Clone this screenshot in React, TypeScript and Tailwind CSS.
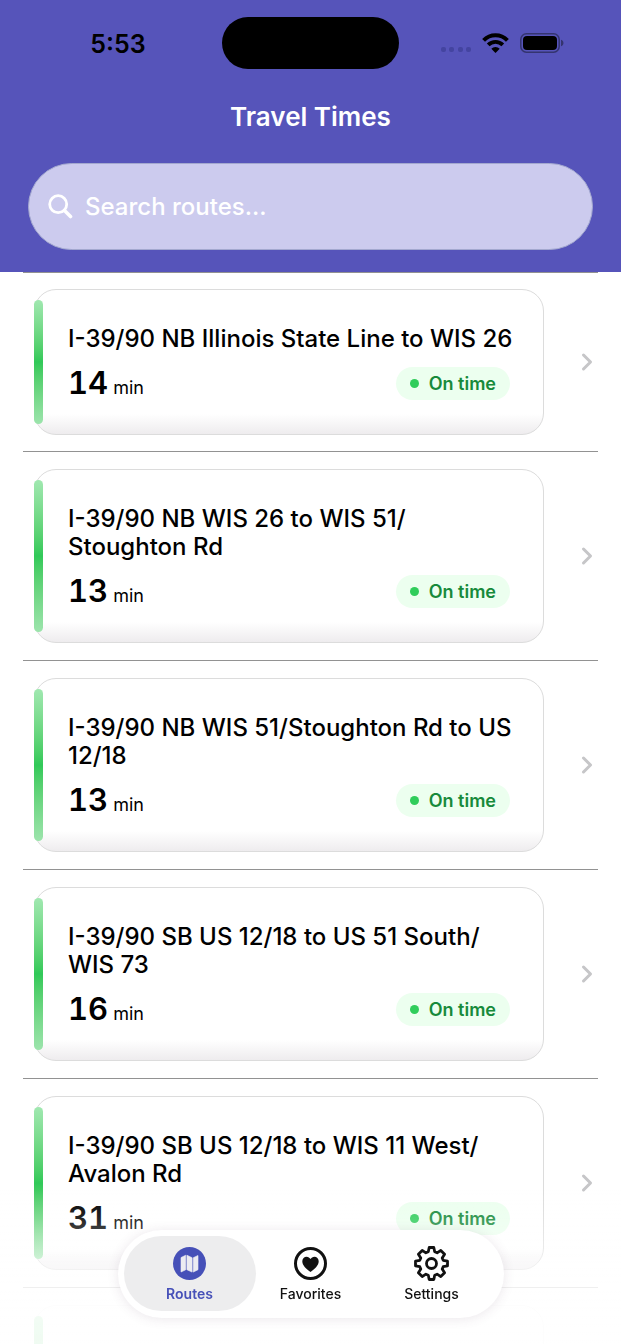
import { ChevronRight } from "lucide-react";

type Route = { lines: string[]; minutes: number; status: string };

const routes: Route[] = [
  { lines: ["I-39/90 NB Illinois State Line to WIS 26"], minutes: 14, status: "On time" },
  { lines: ["I-39/90 NB WIS 26 to WIS 51/", "Stoughton Rd"], minutes: 13, status: "On time" },
  { lines: ["I-39/90 NB WIS 51/Stoughton Rd to US", "12/18"], minutes: 13, status: "On time" },
  { lines: ["I-39/90 SB US 12/18 to US 51 South/", "WIS 73"], minutes: 16, status: "On time" },
  { lines: ["I-39/90 SB US 12/18 to WIS 11 West/", "Avalon Rd"], minutes: 31, status: "On time" },
];

function StatusBar() {
  return (
    <div className="grid grid-cols-3 items-center pt-[17px]">
      <span className="pt-[2px] pl-[29px] text-center text-[25px] leading-[50px] font-semibold text-black">5:53</span>
      <div className="mx-auto h-[52px] w-[177px] rounded-[26px] bg-black" />
      <div className="flex items-center justify-end gap-[11px] pr-[57px]">
        <svg width="30" height="20" viewBox="0 0 30 20" fill="#4444a0" aria-hidden="true">
          <rect x="0" y="14" width="5" height="5" rx="2" />
          <rect x="8" y="14" width="5" height="5" rx="2" />
          <rect x="17" y="14" width="5" height="5" rx="2" />
          <rect x="25" y="14" width="5" height="5" rx="2" />
        </svg>
        <svg width="27" height="20" viewBox="0 0 27 20" aria-hidden="true">
          <path d="M1.600 7.300a16.600 16.600 0 0 1 23.800 0" fill="none" stroke="#000" strokeWidth="4" />
          <path d="M6.200 11.900a10.200 10.200 0 0 1 14.600 0" fill="none" stroke="#000" strokeWidth="3.800" />
          <path d="M13.500 20l-4.200-4.300a6.200 6.200 0 0 1 8.400 0z" fill="#000" />
        </svg>
        <svg width="44" height="20" viewBox="0 0 44 20" aria-hidden="true">
          <rect x="0.800" y="0.800" width="38.400" height="18.400" rx="5.600" fill="none" stroke="#34346f" strokeWidth="1.500" />
          <rect x="3" y="3" width="34" height="14" rx="4" fill="#000" />
          <path d="M41 6.800c3.300 1 3.300 5.400 0 6.400z" fill="#34346f" />
        </svg>
      </div>
    </div>
  );
}

function RouteRow({ route }: { route: Route }) {
  return (
    <li className="border-t border-[#929292] py-[17px] first:py-4">
      <a href="#" className="-mr-[3px] flex items-center pl-[11px]">
        <div className="relative min-w-0 flex-1 rounded-[22px] border border-[#dcdcdc] bg-gradient-to-t from-[#eeecee] to-white to-[20px] px-[33px] pt-[35px] pb-[34px]">
          <span className="absolute inset-y-[10px] -left-px w-[9px] rounded-full bg-gradient-to-b from-[#a0e8b0] via-[#30c958] to-[#9ce4ac]" />
          <h2 className="text-[24px] leading-7 font-medium text-black">
            {route.lines.map((line) => (
              <span key={line} className="block whitespace-nowrap">{line}</span>
            ))}
          </h2>
          <div className="mt-[14px] flex h-[33px] items-center justify-between">
            <p className="flex items-baseline gap-[5px] text-black">
              <span className="text-[31px] leading-[33px] font-semibold tabular-nums">{route.minutes}</span>
              <span className="text-[18px]">min</span>
            </p>
            <span className="flex h-[33px] items-center gap-[10px] rounded-full bg-[#ecffef] px-[14px] text-[18px] font-semibold text-[#178a3b]">
              <span className="size-[9px] rounded-full bg-[#30cd5b]" />
              {route.status}
            </span>
          </div>
        </div>
        <ChevronRight className="ml-[29px] shrink-0 text-[#c6c6c8]" size={28} strokeWidth={2.6} />
      </a>
    </li>
  );
}

function MapIcon() {
  return (
    <svg width="33" height="33" viewBox="0 0 33 33" aria-hidden="true">
      <circle cx="16.500" cy="16.500" r="16.500" fill="#4650b8" />
      <path d="M8 10.600l4.700-2.400v14.600L8 25z M13.900 8.200l5.200 2.500v14.400l-5.200-2.400z M20.300 10.700L25 8.500v14.200l-4.700 2.400z" fill="#ececf2" stroke="#ececf2" strokeWidth="0.600" strokeLinejoin="round" />
    </svg>
  );
}

function HeartIcon() {
  return (
    <svg width="33" height="33" viewBox="0 0 33 33" aria-hidden="true">
      <circle cx="16.500" cy="16.500" r="15" fill="none" stroke="#111" strokeWidth="3" />
      <path d="M16.500 25C12 21.800 8.300 18.300 8.300 14.300c0-2.800 2-4.600 4.300-4.600 1.700 0 3.100.9 3.900 2.400.8-1.500 2.200-2.400 3.900-2.400 2.300 0 4.300 1.800 4.300 4.600 0 4-3.700 7.500-8.200 10.700z" fill="#111" />
    </svg>
  );
}

function GearIcon() {
  return (
    <svg width="35" height="35" viewBox="0 0 35 35" fill="none" stroke="#111" strokeWidth="2.800" strokeLinejoin="round" aria-hidden="true">
      <path d="M15.200 1.500h4.600l.9 4.300 2.400 1 3.700-2.400 3.800 3.800-2.400 3.700 1 2.400 4.300.9v4.600l-4.300.9-1 2.400 2.400 3.700-3.800 3.800-3.700-2.400-2.400 1-.9 4.300h-4.600l-.9-4.300-2.400-1-3.700 2.400-3.800-3.800 2.400-3.700-1-2.400-4.300-.9v-4.600l4.300-.9 1-2.400-2.400-3.700 3.800-3.800 3.700 2.400 2.400-1z" />
      <circle cx="17.500" cy="17.500" r="5" />
    </svg>
  );
}

const tabs = [
  { label: "Routes", icon: <MapIcon />, active: true },
  { label: "Favorites", icon: <HeartIcon />, active: false },
  { label: "Settings", icon: <GearIcon />, active: false },
];

function TabBar() {
  return (
    <nav className="fixed bottom-[26px] left-1/2 flex -translate-x-1/2 rounded-full bg-white px-[6px] pt-[6px] pb-[7px] shadow-[0_1px_12px_rgba(90,60,90,0.12)]">
      {tabs.map((tab) => (
        <button
          key={tab.label}
          type="button"
          className={`-mr-[11px] flex h-[75px] w-[132px] flex-col items-center rounded-full pt-[10px] text-[14px] leading-5 last:mr-0 ${
            tab.active ? "bg-[#ededee] font-semibold text-[#4650b8]" : "font-medium text-[#111111]"
          }`}
        >
          <span className="flex h-[35px] items-center">{tab.icon}</span>
          <span className="mt-[3px]">{tab.label}</span>
        </button>
      ))}
    </nav>
  );
}

export default function App() {
  return (
    <div className="flex h-screen flex-col overflow-hidden bg-white font-['Inter','Liberation_Sans',sans-serif]">
      <header className="shrink-0 bg-[#5654ba] pb-[22px]">
        <StatusBar />
        <h1 className="mt-[30px] text-center text-[26px] leading-9 font-semibold text-white">Travel Times</h1>
        <label className="mx-7 mt-7 flex h-[87px] items-center gap-3 rounded-full border border-[#a3a8cf] bg-[#cccbee] px-[19px]">
          <svg width="25" height="25" viewBox="0 0 25 25" fill="none" stroke="#fff" aria-hidden="true">
            <circle cx="10.200" cy="10.200" r="8.500" strokeWidth="2.800" />
            <path d="M16.500 16.500L22.500 22.500" strokeWidth="3.600" strokeLinecap="round" />
          </svg>
          <input
            type="search"
            aria-label="Search routes"
            placeholder="Search routes..."
            className="min-w-0 flex-1 bg-transparent text-[24px] font-medium text-white outline-none placeholder:text-white"
          />
        </label>
      </header>

      <main className="min-h-0 flex-1 overflow-y-auto [scrollbar-width:none]">
        <ul className="mx-[23px]">
          {routes.map((route) => (
            <RouteRow key={route.lines[0]} route={route} />
          ))}
          <li className="border-t border-[#929292] pt-[17px] pr-[54px] pl-[11px]">
            <div className="relative h-[174px] rounded-[22px] border border-[#ededed]">
              <span className="absolute inset-y-[10px] -left-px w-[9px] rounded-full bg-gradient-to-b from-[#a0e8b0] via-[#30c958] to-[#9ce4ac]" />
            </div>
          </li>
        </ul>
      </main>

      <div className="pointer-events-none fixed inset-x-0 bottom-0 h-[154px] bg-[linear-gradient(to_bottom,rgba(255,255,255,0),rgba(255,255,255,0.14)_18%,rgba(255,255,255,0.45)_42%,rgba(255,255,255,0.85)_63%,rgba(255,255,255,0.88))]" />
      <TabBar />
    </div>
  );
}
